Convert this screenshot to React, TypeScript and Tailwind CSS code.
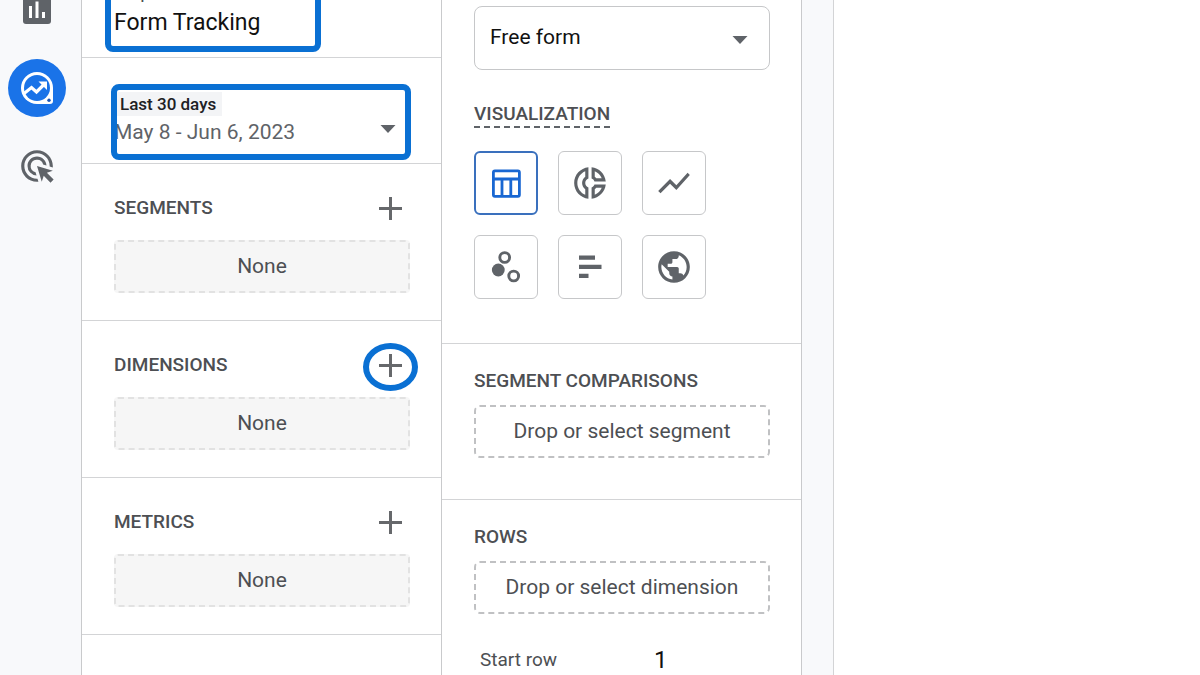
import React, { useState } from 'react';
import { MdAdsClick, MdOutlineDonutSmall, MdPublic, MdShowChart } from 'react-icons/md';

const AssessmentIcon = () => (
  <svg className="h-7 w-7" viewBox="0 0 28 28" aria-hidden="true">
    <rect width="28" height="28" rx="3" fill="#5f6368" />
    <path d="M6 10h3v12H6zM12.500 5.500h3V22h-3zM19 16h3v6h-3z" fill="#fff" />
  </svg>
);

const ExploreIcon = () => (
  <svg className="h-8 w-8" viewBox="0 0 32 32" aria-hidden="true">
    <path d="M32 16A16 16 0 1 0 16 32h13a3 3 0 0 0 3-3z" fill="#fff" />
    <circle cx="16" cy="16" r="13" fill="#1a73e8" />
    <path d="M3 21.500l7.500-6 5 4.500 8-8" fill="none" stroke="#fff" strokeWidth="3.200" />
    <path d="M17.500 9.500h8.500v8.500z" fill="#fff" />
    <circle cx="28" cy="28.300" r="1.700" fill="#1a56b8" />
  </svg>
);

const TableIcon = () => (
  <svg className="h-8 w-8" viewBox="0 0 32 32" fill="none" stroke="currentColor" strokeWidth="2.800" aria-hidden="true">
    <rect x="3.400" y="3.900" width="26" height="25.400" rx="1.500" />
    <path d="M3 12h26M12 12V29M20.800 12V29" />
  </svg>
);

const ScatterIcon = () => (
  <svg className="h-8 w-8" viewBox="0 0 32 32" fill="none" stroke="currentColor" strokeWidth="2.900" aria-hidden="true">
    <circle cx="14.700" cy="6.500" r="4.900" />
    <circle cx="8.300" cy="19" r="6.400" fill="currentColor" stroke="none" />
    <circle cx="23.700" cy="25" r="4.900" />
  </svg>
);

const BarsIcon = () => (
  <svg className="h-8 w-8" viewBox="0 0 32 32" fill="currentColor" aria-hidden="true">
    <path d="M5 4.500h16v4.300H5zM5 13.700h22.500V18H5zM5 22.700h9.500V27H5z" />
  </svg>
);

const Caret = () => (
  <svg className="h-2 w-4" viewBox="0 0 16 8" fill="#5f6368" aria-hidden="true">
    <path d="M0.500 0h15L8 8z" />
  </svg>
);

const visualizations = [
  { name: 'Free form', icon: <TableIcon /> },
  { name: 'Donut chart', icon: <MdOutlineDonutSmall className="h-[38px] w-[38px]" /> },
  { name: 'Line chart', icon: <MdShowChart className="h-[38px] w-[38px]" /> },
  { name: 'Scatter plot', icon: <ScatterIcon /> },
  { name: 'Bar chart', icon: <BarsIcon /> },
  { name: 'Geo map', icon: <MdPublic className="h-[38px] w-[38px]" /> },
];

interface VariableSectionProps {
  title: string;
  highlighted?: boolean;
}

const VariableSection: React.FC<VariableSectionProps> = ({ title, highlighted }) => (
  <section className="border-b border-[#d3d4d6] pt-7 pr-[31px] pb-[27px] pl-8">
    <div className="flex items-center justify-between">
      <h2 className="text-[19px] leading-6 font-medium">{title}</h2>
      <button type="button" aria-label={`Add ${title.toLowerCase()}`} className="relative flex h-8 w-10 items-center justify-center">
        <svg className="h-6 w-6" viewBox="0 0 24 24" stroke="#66686b" strokeWidth="3" aria-hidden="true">
          <path d="M12.500 1v23M1 12.500h23" />
        </svg>
        {highlighted && (
          <span className="absolute -top-1.5 -left-[7px] h-12 w-[55px] rounded-[50%] border-6 border-[#0a70d3]" />
        )}
      </button>
    </div>
    <div className="mt-4 flex h-[53px] items-center justify-center rounded-sm border-2 border-dashed border-[#e2e2e2] bg-[#f6f6f6] text-[21px]">
      None
    </div>
  </section>
);

interface DropZoneProps {
  title: string;
  hint: string;
}

const DropZone: React.FC<DropZoneProps> = ({ title, hint }) => (
  <>
    <h2 className="text-[19px] leading-6 font-medium">{title}</h2>
    <button
      type="button"
      className="mt-3 flex h-[53px] w-full items-center justify-center rounded-md border-2 border-dashed border-[#c0c1c3] text-[21px]"
    >
      {hint}
    </button>
  </>
);

const App: React.FC = () => {
  const [name, setName] = useState('Form Tracking');
  const [technique, setTechnique] = useState('Free form');
  const [startRow, setStartRow] = useState('1');
  const [selected, setSelected] = useState('Free form');

  return (
    <div className="flex h-screen overflow-hidden bg-[#f8f9fb] font-[Roboto,sans-serif] text-[#4d4f53]">
      {/* Navigation rail */}
      <nav className="w-[82px] shrink-0 border-r border-[#c9cacc] pl-2">
        <div className="-mt-[19px] flex flex-col gap-5">
          <button type="button" aria-label="Reports" className="flex size-[58px] items-center justify-center">
            <AssessmentIcon />
          </button>
          <button type="button" aria-label="Explore" className="flex size-[58px] items-center justify-center rounded-full bg-[#1a73e8]">
            <ExploreIcon />
          </button>
          <button type="button" aria-label="Advertising" className="flex size-[58px] items-center justify-center text-[#5f6368]">
            <MdAdsClick className="h-[38px] w-[38px]" />
          </button>
        </div>
      </nav>

      {/* Variables */}
      <div className="w-[360px] shrink-0 border-r border-[#c9cacc] bg-white">
        <section className="relative -mt-5 border-b border-[#d3d4d6] pr-[31px] pb-[17px] pl-8">
          <label htmlFor="exploration-name" className="block pl-1.5 text-[19px] leading-6">Exploration Name:</label>
          <input
            id="exploration-name"
            className="block h-9 w-full text-[23px] text-[#111] outline-none"
            value={name}
            onChange={(e) => setName(e.target.value)}
          />
          <span className="pointer-events-none absolute -top-2 bottom-[5px] left-[23px] w-[216px] rounded-lg border-6 border-[#0a70d3]" />
        </section>

        <section className="relative border-b border-[#d3d4d6] pt-[34px] pr-[31px] pb-3.5 pl-8">
          <button type="button" className="flex w-full items-end justify-between text-left">
            <span>
              <span className="block w-fit bg-[#f3f4f6] px-1.5 text-[17px] leading-6 font-medium text-[#202124]">Last 30 days</span>
              <span className="block text-[21px] leading-[33px] text-[#5f6368]">May 8 - Jun 6, 2023</span>
            </span>
            <span className="px-3.5 pb-4">
              <Caret />
            </span>
          </button>
          <span className="pointer-events-none absolute top-[26px] right-[30px] bottom-[3px] left-[29px] rounded-lg border-6 border-[#0a70d3]" />
        </section>

        <VariableSection title="SEGMENTS" />
        <VariableSection title="DIMENSIONS" highlighted />
        <VariableSection title="METRICS" />
      </div>

      {/* Tab settings */}
      <div className="w-[360px] shrink-0 border-r border-[#c9cacc] bg-white">
        <section className="border-b border-[#d3d4d6] pt-1.5 pr-[31px] pb-11 pl-8">
          <div className="relative">
            <select
              aria-label="Technique"
              className="block h-16 w-full appearance-none rounded-lg border border-[#c6c7c9] bg-white px-[15px] text-[21px] text-[#111]"
              value={technique}
              onChange={(e) => setTechnique(e.target.value)}
            >
              <option>Free form</option>
            </select>
            <span className="pointer-events-none absolute top-[30px] right-[22px]">
              <Caret />
            </span>
          </div>
          <h2 className="mt-8 w-fit border-b-2 border-dashed border-[#5f6368] text-[19px] leading-6 font-medium">VISUALIZATION</h2>
          <div className="mt-[23px] flex flex-wrap gap-5">
            {visualizations.map((v) => (
              <button
                key={v.name}
                type="button"
                aria-label={v.name}
                onClick={() => setSelected(v.name)}
                className={
                  selected === v.name
                    ? 'flex size-16 items-center justify-center rounded-md border-2 border-[#3a70bd] text-[#1967d2]'
                    : 'flex size-16 items-center justify-center rounded-md border border-[#c6c7c9] text-[#5f6368]'
                }
              >
                {v.icon}
              </button>
            ))}
          </div>
        </section>

        <section className="border-b border-[#d3d4d6] pt-[25px] pr-[31px] pb-[41px] pl-8">
          <DropZone title="SEGMENT COMPARISONS" hint="Drop or select segment" />
        </section>

        <section className="pt-[25px] pr-[31px] pl-8">
          <DropZone title="ROWS" hint="Drop or select dimension" />
          <div className="mt-[30px] flex h-8 items-center pl-1.5">
            <label htmlFor="start-row" className="w-[174px] text-[19px]">Start row</label>
            <input
              id="start-row"
              className="w-20 text-[24px] text-[#111] outline-none"
              value={startRow}
              onChange={(e) => setStartRow(e.target.value)}
            />
          </div>
        </section>
      </div>

      {/* Canvas */}
      <main className="ml-[31px] flex-1 border-l border-[#d3d4d6] bg-white" />
    </div>
  );
};

export default App;
